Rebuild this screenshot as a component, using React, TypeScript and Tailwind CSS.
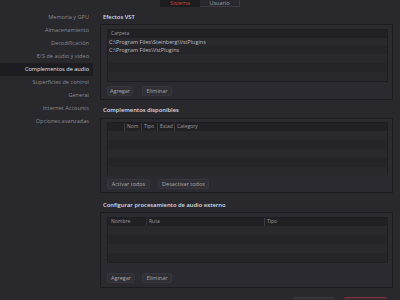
import React from "react";

const navItems = [
  "Memoria y GPU",
  "Almacenamiento",
  "Decodificación",
  "E/S de audio y video",
  "Complementos de audio",
  "Superficies de control",
  "General",
  "Internet Accounts",
  "Opciones avanzadas",
];

const Btn = ({ label, w }: { label: string; w: string }) => (
  <div
    className={`h-[10px] ${w} flex items-center justify-center rounded-[2px] bg-[#2f2f35] border border-[#36363c] text-[5.5px] text-[#a9a9ae]`}
  >
    {label}
  </div>
);

const Rows = ({ n }: { n: number }) => (
  <div className="flex-1 flex flex-col">
    {Array.from({ length: n }).map((_, i) => (
      <div
        key={i}
        className={`h-[9px] ${i % 2 === 0 ? "bg-[#28282d]" : "bg-[#252529]"}`}
      />
    ))}
  </div>
);

export default function App() {
  return (
    <div
      className="w-[400px] h-[300px] overflow-hidden bg-[#28282d] flex flex-col"
      style={{ fontFamily: '"Open Sans", "Liberation Sans", sans-serif' }}
    >
      {/* top tabs */}
      <div className="h-[7px] flex pl-[160px]">
        <div className="w-[40px] h-[7px] bg-[#1c1c1f] flex items-center justify-center text-[5.5px] leading-[7px] text-[#c8453c]">
          Sistema
        </div>
        <div className="w-[40px] h-[7px] border-r border-b border-[#3a3a40] flex items-center justify-center text-[5.5px] leading-[6px] text-[#a0a0a6]">
          Usuario
        </div>
      </div>

      <div className="flex flex-1">
        {/* sidebar */}
        <div className="w-[100px] pt-[4px] flex flex-col">
          {navItems.map((item) => (
            <div
              key={item}
              className={`h-[13px] w-[93px] flex items-center justify-end pr-[4px] text-[5.6px] ${
                item === "Complementos de audio"
                  ? "bg-[#1d1d21] text-[#e4e4e6]"
                  : "text-[#8a8a90]"
              }`}
            >
              {item}
            </div>
          ))}
        </div>

        {/* main */}
        <div className="w-[293px] flex flex-col">
          {/* Efectos VST */}
          <div className="mt-[6px] h-[9px] flex items-center pl-[3px] text-[5.8px] font-semibold text-[#dcdce0]">
            Efectos VST
          </div>
          <div className="mt-[2px] h-[76px] border border-[#1c1c20] bg-[#2a2a30] px-[6px] pt-[4px] flex flex-col">
            <div className="h-[53px] w-[281px] border border-[#1e1e22] bg-[#27272c] flex flex-col">
              <div className="h-[9px] bg-[#212125] flex items-center pl-[3px] text-[5px] text-[#9a9aa0]">
                Carpeta
              </div>
              <div className="h-[9px] flex items-center pl-[1px] text-[5.5px] text-[#bdbdc2] bg-[#28282d]">
                C:\Program Files\Steinberg\VstPlugins
              </div>
              <div className="h-[9px] flex items-center pl-[1px] text-[5.5px] text-[#bdbdc2] bg-[#252529]">
                C:\Program Files\VstPlugins
              </div>
              <Rows n={3} />
            </div>
            <div className="mt-[4px] flex gap-[9px]">
              <Btn label="Agregar" w="w-[26px]" />
              <Btn label="Eliminar" w="w-[30px]" />
            </div>
          </div>

          {/* Complementos disponibles */}
          <div className="mt-[6px] h-[9px] flex items-center pl-[3px] text-[5.8px] font-semibold text-[#dcdce0]">
            Complementos disponibles
          </div>
          <div className="mt-[3px] h-[75px] border border-[#1c1c20] bg-[#2a2a30] px-[6px] pt-[3px] flex flex-col">
            <div className="h-[53px] w-[281px] border border-[#1e1e22] bg-[#27272c] flex flex-col">
              <div className="h-[9px] bg-[#212125] flex text-[5px] text-[#9a9aa0]">
                <div className="w-[17px] border-r border-[#3a3a40]" />
                <div className="w-[17px] border-r border-[#3a3a40] flex items-center pl-[2px]">Nom</div>
                <div className="w-[16px] border-r border-[#3a3a40] flex items-center pl-[2px]">Tipo</div>
                <div className="w-[17px] border-r border-[#3a3a40] flex items-center pl-[2px]">Estad</div>
                <div className="flex items-center pl-[2px]">Category</div>
              </div>
              <Rows n={5} />
            </div>
            <div className="mt-[4px] flex gap-[8px]">
              <Btn label="Activar todos" w="w-[43px]" />
              <Btn label="Desactivar todos" w="w-[51px]" />
            </div>
          </div>

          {/* Configurar procesamiento */}
          <div className="mt-[8px] h-[9px] flex items-center pl-[3px] text-[5.8px] font-semibold text-[#dcdce0]">
            Configurar procesamiento de audio externo
          </div>
          <div className="mt-[2px] h-[76px] border border-[#1c1c20] bg-[#2a2a30] px-[6px] pt-[4px] flex flex-col">
            <div className="h-[46px] w-[281px] border border-[#1e1e22] bg-[#27272c] flex flex-col">
              <div className="h-[9px] bg-[#212125] flex text-[5px] text-[#9a9aa0]">
                <div className="w-[39px] border-r border-[#2e2e33] flex items-center pl-[3px]">Nombre</div>
                <div className="w-[118px] border-r border-[#3a3a40] flex items-center pl-[2px]">Ruta</div>
                <div className="flex items-center pl-[2px]">Tipo</div>
              </div>
              <Rows n={4} />
            </div>
            <div className="mt-[10px] flex gap-[7px]">
              <Btn label="Agregar" w="w-[28px]" />
              <Btn label="Eliminar" w="w-[30px]" />
            </div>
          </div>

          {/* bottom buttons peeking */}
          <div className="mt-[9px] flex gap-[9px] pl-[193px]">
            <div className="w-[42px] h-[8px] rounded-t-[2px] bg-[#2f2f35] border-t border-[#3a3a40]" />
            <div className="w-[43px] h-[8px] rounded-t-[2px] bg-[#3a2a30] border-t border-[#8a3040]" />
          </div>
        </div>
      </div>
    </div>
  );
}
